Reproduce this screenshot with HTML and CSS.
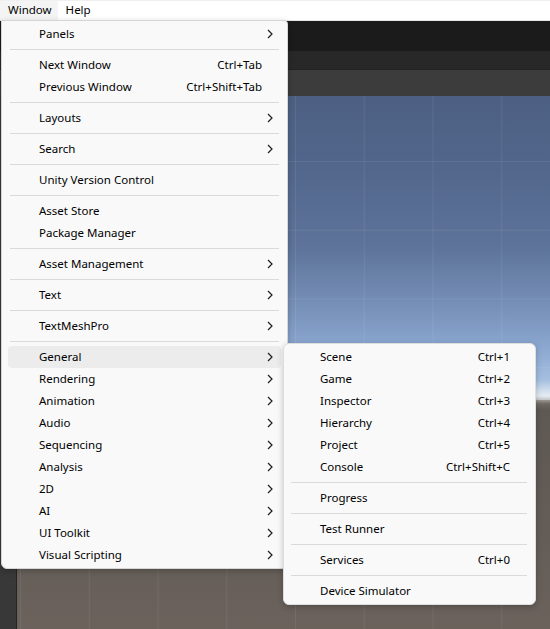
FILE: index.html
```html
<!DOCTYPE html>
<html>
<head>
<meta charset="utf-8">
<link rel="stylesheet" href="styles.css">
</head>
<body>
<div class="editor">
  <div class="menubar">
    <span class="mb-item active">Window</span>
    <span class="mb-item">Help</span>
  </div>
  <div class="tb1"></div>
  <div class="tb2"></div>
  <div class="tabbar"></div>
  <div class="workspace">
    <div class="side"></div>
    <div class="scene">
      <div class="sky"></div>
      <div class="ground"></div>
    </div>
  </div>

  <div class="menu main-menu">
    <div class="item"><span class="label">Panels</span><span class="arrow"><svg width="6" height="10" viewBox="0 0 6 10"><polyline points="1,1 5,5 1,9"/></svg></span></div>
    <div class="sep"></div>
    <div class="item"><span class="label">Next Window</span><span class="shortcut">Ctrl+Tab</span><span class="arrow"></span></div>
    <div class="item"><span class="label">Previous Window</span><span class="shortcut">Ctrl+Shift+Tab</span><span class="arrow"></span></div>
    <div class="sep"></div>
    <div class="item"><span class="label">Layouts</span><span class="arrow"><svg width="6" height="10" viewBox="0 0 6 10"><polyline points="1,1 5,5 1,9"/></svg></span></div>
    <div class="sep"></div>
    <div class="item"><span class="label">Search</span><span class="arrow"><svg width="6" height="10" viewBox="0 0 6 10"><polyline points="1,1 5,5 1,9"/></svg></span></div>
    <div class="sep"></div>
    <div class="item"><span class="label">Unity Version Control</span><span class="arrow"></span></div>
    <div class="sep"></div>
    <div class="item"><span class="label">Asset Store</span><span class="arrow"></span></div>
    <div class="item"><span class="label">Package Manager</span><span class="arrow"></span></div>
    <div class="sep"></div>
    <div class="item"><span class="label">Asset Management</span><span class="arrow"><svg width="6" height="10" viewBox="0 0 6 10"><polyline points="1,1 5,5 1,9"/></svg></span></div>
    <div class="sep"></div>
    <div class="item"><span class="label">Text</span><span class="arrow"><svg width="6" height="10" viewBox="0 0 6 10"><polyline points="1,1 5,5 1,9"/></svg></span></div>
    <div class="sep"></div>
    <div class="item"><span class="label">TextMeshPro</span><span class="arrow"><svg width="6" height="10" viewBox="0 0 6 10"><polyline points="1,1 5,5 1,9"/></svg></span></div>
    <div class="sep"></div>
    <div class="item hover"><span class="label">General</span><span class="arrow"><svg width="6" height="10" viewBox="0 0 6 10"><polyline points="1,1 5,5 1,9"/></svg></span></div>
    <div class="item"><span class="label">Rendering</span><span class="arrow"><svg width="6" height="10" viewBox="0 0 6 10"><polyline points="1,1 5,5 1,9"/></svg></span></div>
    <div class="item"><span class="label">Animation</span><span class="arrow"><svg width="6" height="10" viewBox="0 0 6 10"><polyline points="1,1 5,5 1,9"/></svg></span></div>
    <div class="item"><span class="label">Audio</span><span class="arrow"><svg width="6" height="10" viewBox="0 0 6 10"><polyline points="1,1 5,5 1,9"/></svg></span></div>
    <div class="item"><span class="label">Sequencing</span><span class="arrow"><svg width="6" height="10" viewBox="0 0 6 10"><polyline points="1,1 5,5 1,9"/></svg></span></div>
    <div class="item"><span class="label">Analysis</span><span class="arrow"><svg width="6" height="10" viewBox="0 0 6 10"><polyline points="1,1 5,5 1,9"/></svg></span></div>
    <div class="item"><span class="label">2D</span><span class="arrow"><svg width="6" height="10" viewBox="0 0 6 10"><polyline points="1,1 5,5 1,9"/></svg></span></div>
    <div class="item"><span class="label">AI</span><span class="arrow"><svg width="6" height="10" viewBox="0 0 6 10"><polyline points="1,1 5,5 1,9"/></svg></span></div>
    <div class="item"><span class="label">UI Toolkit</span><span class="arrow"><svg width="6" height="10" viewBox="0 0 6 10"><polyline points="1,1 5,5 1,9"/></svg></span></div>
    <div class="item"><span class="label">Visual Scripting</span><span class="arrow"><svg width="6" height="10" viewBox="0 0 6 10"><polyline points="1,1 5,5 1,9"/></svg></span></div>
  </div>

  <div class="menu sub-menu">
    <div class="item"><span class="label">Scene</span><span class="shortcut">Ctrl+1</span><span class="arrow"></span></div>
    <div class="item"><span class="label">Game</span><span class="shortcut">Ctrl+2</span><span class="arrow"></span></div>
    <div class="item"><span class="label">Inspector</span><span class="shortcut">Ctrl+3</span><span class="arrow"></span></div>
    <div class="item"><span class="label">Hierarchy</span><span class="shortcut">Ctrl+4</span><span class="arrow"></span></div>
    <div class="item"><span class="label">Project</span><span class="shortcut">Ctrl+5</span><span class="arrow"></span></div>
    <div class="item"><span class="label">Console</span><span class="shortcut">Ctrl+Shift+C</span><span class="arrow"></span></div>
    <div class="sep"></div>
    <div class="item"><span class="label">Progress</span><span class="arrow"></span></div>
    <div class="sep"></div>
    <div class="item"><span class="label">Test Runner</span><span class="arrow"></span></div>
    <div class="sep"></div>
    <div class="item"><span class="label">Services</span><span class="shortcut">Ctrl+0</span><span class="arrow"></span></div>
    <div class="sep"></div>
    <div class="item"><span class="label">Device Simulator</span><span class="arrow"></span></div>
  </div>
</div>
</body>
</html>
```

FILE: styles.css
```css
* { box-sizing: border-box; }
html, body { margin: 0; padding: 0; }
body {
  font-family: "Noto Sans", "Open Sans", sans-serif;
  font-size: 11.5px;
  color: #000;
  background: #383838;
}
.editor {
  position: relative;
  width: 550px;
  height: 629px;
  overflow: hidden;
  display: flex;
  flex-direction: column;
}
.menubar {
  height: 21px;
  flex: none;
  display: flex;
  background: #ffffff;
  border-top: 1px solid #f0f0f0;
  border-bottom: 1px solid #e4e4e4;
}
.mb-item {
  display: flex;
  align-items: center;
  padding: 0 8px 1px;
  line-height: 18px;
}
.mb-item.active {
  background: #f4f4f4;
  padding: 0 6px 1px 8px;
}
.tb1 { height: 30px; flex: none; background: #1b1b1b; }
.tb2 { height: 19px; flex: none; background: #282828; border-bottom: 1px solid #222; }
.tabbar { height: 26px; flex: none; background: #3c3c3c; }
.workspace { flex: 1; display: flex; min-height: 0; }
.side { width: 17px; flex: none; background: #383838; border-right: 1px solid #242424; }
.scene { flex: 1; display: flex; flex-direction: column; }
.sky {
  height: 304px;
  flex: none;
  background-image:
    linear-gradient(to right, rgba(255,255,255,0.07) 0 1px, transparent 1px),
    linear-gradient(to bottom, rgba(255,255,255,0.07) 0 1px, transparent 1px),
    linear-gradient(to bottom,
      #4d6083 0px,
      #51658a 60px,
      #5d7399 150px,
      #7790b7 210px,
      #8aa6cf 250px,
      #a5bfe0 284px,
      #d3e0ee 295px,
      #e4ebf1 300px,
      #c2c3c4 304px);
  background-size: 68.75px 100%, 100% 68.75px, 100% 100%;
  background-position: 3px 0, 0 65px, 0 0;
  background-repeat: repeat-x, repeat-y, no-repeat;
}
.ground {
  flex: 1;
  background-image:
    linear-gradient(to right, rgba(255,255,255,0.07) 0 1px, transparent 1px),
    linear-gradient(to bottom,
      #9e9892 0px,
      #6e6761 4px,
      #5f5954 10px,
      #615a55 80px,
      #6a625b 229px);
  background-size: 68.75px 100%, 100% 100%;
  background-position: 3px 0, 0 0;
  background-repeat: repeat-x, no-repeat;
}

.menu {
  position: absolute;
  background: #f9f9f9;
  border: 1px solid #d6d6d6;
  padding: 2px 0;
  box-shadow: 0 2px 6px rgba(0,0,0,0.22);
}
.main-menu {
  left: 1px;
  top: 20px;
  width: 287px;
  border-radius: 0 4px 6px 6px;
}
.sub-menu {
  left: 283px;
  top: 343px;
  width: 253px;
  border-radius: 6px;
  border-color: #dedede;
}
.item {
  height: 22px;
  display: flex;
  align-items: center;
  margin: 0 6px;
  padding: 0 8px 2px 31px;
  border-radius: 4px;
  white-space: nowrap;
}
.sub-menu .item { padding-left: 30px; }
.item.hover { background: #ececec; }
.label { flex: 1; }
.arrow {
  width: 11px;
  flex: none;
  display: flex;
  align-items: center;
  padding-left: 5px;
}
.arrow svg { display: block; margin-top: 2px; }
.arrow polyline {
  fill: none;
  stroke: #1e1e1e;
  stroke-width: 1.2;
}
.sep {
  height: 9px;
  margin: 0 8px;
  display: flex;
  align-items: center;
}
.sep::before {
  content: "";
  display: block;
  height: 1px;
  width: 100%;
  background: #dadada;
}
.sub-menu .sep { margin: 0 8px 0 7px; }
```
